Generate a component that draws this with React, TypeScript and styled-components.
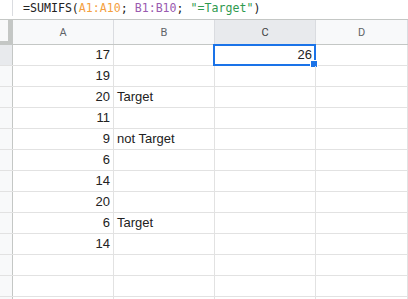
import React from 'react';
import styled, { createGlobalStyle } from 'styled-components';

const GlobalStyle = createGlobalStyle`
  body {
    margin: 0;
    background: #ffffff;
    font-family: 'Liberation Sans', Arial, sans-serif;
  }
`;

const columns = ['A', 'B', 'C', 'D'];
const selectedCol = 2;

type Row = { a?: string; b?: string; c?: string };

const rows: Row[] = [
  { a: '17', c: '26' },
  { a: '19' },
  { a: '20', b: 'Target' },
  { a: '11' },
  { a: '9', b: 'not Target' },
  { a: '6' },
  { a: '14' },
  { a: '20' },
  { a: '6', b: 'Target' },
  { a: '14' },
  {},
  {},
  {},
];

const App = () => {
  return (
    <>
      <GlobalStyle />
      <Sheet>
        <FormulaBar>
          <FormulaLabel />
          <FormulaText>
            =SUMIFS(<RefA>A1:A10</RefA>; <RefB>B1:B10</RefB>; <Str>"=Target"</Str>)
          </FormulaText>
        </FormulaBar>
        <HeaderRow>
          <Corner />
          {columns.map((c, i) => (
            <ColHeader key={c} $active={i === selectedCol} $last={i === columns.length - 1}>
              {c}
            </ColHeader>
          ))}
        </HeaderRow>
        {rows.map((r, i) => (
          <GridRow key={i}>
            <RowHeader $active={i === 0} />
            <Cell $align="right">{r.a}</Cell>
            <Cell $align="left">{r.b}</Cell>
            <Cell $align="right">
              {r.c}
              {i === 0 && (
                <>
                  <Selection />
                  <Handle />
                </>
              )}
            </Cell>
            <Cell $align="left" $last />
          </GridRow>
        ))}
      </Sheet>
    </>
  );
};

const Sheet = styled.div`
  width: 408px;
  height: 299px;
  overflow: hidden;
  background: #ffffff;
`;

const FormulaBar = styled.div`
  display: flex;
  height: 19px;
  border-bottom: 1px solid #c4c7c5;
`;
const FormulaLabel = styled.div`
  width: 12px;
  height: 16px;
  border-right: 1px solid #dadce0;
`;
const FormulaText = styled.div`
  padding-left: 10px;
  font-family: 'DejaVu Sans Mono', 'Liberation Mono', monospace;
  font-size: 11.6px;
  line-height: 16px;
  color: #222222;
  white-space: pre;
`;
const RefA = styled.span`
  color: #f4a03e;
`;
const RefB = styled.span`
  color: #9a5ab0;
`;
const Str = styled.span`
  color: #2f9a4f;
`;

const HeaderRow = styled.div`
  display: flex;
  height: 24px;
  border-bottom: 1px solid #c4c7c5;
  background: #f8f9fa;
`;
const Corner = styled.div`
  width: 12px;
  flex: none;
  border-right: 1px solid #c4c7c5;
  box-shadow: inset -4px -3px 0 #c4c7c5;
`;
const ColHeader = styled.div<{ $active?: boolean; $last?: boolean }>`
  width: 100px;
  flex: ${(p) => (p.$last ? '1' : 'none')};
  border-right: 1px solid #dadce0;
  background: ${(p) => (p.$active ? '#e8eaed' : '#f8f9fa')};
  color: ${(p) => (p.$active ? '#3c4043' : '#5f6368')};
  font-family: Roboto, 'Liberation Sans', Arial, sans-serif;
  font-size: 11px;
  display: flex;
  align-items: center;
  justify-content: center;
`;

const GridRow = styled.div`
  display: flex;
  height: 20px;
  border-bottom: 1px solid #e2e2e2;
`;
const RowHeader = styled.div<{ $active?: boolean }>`
  width: 12px;
  flex: none;
  border-right: 1px solid #c4c7c5;
  background: ${(p) => (p.$active ? '#e8eaed' : '#f8f9fa')};
`;
const Cell = styled.div<{ $align: 'left' | 'right'; $last?: boolean }>`
  position: relative;
  flex: ${(p) => (p.$last ? '1' : 'none')};
  border-right: 1px solid #e2e2e2;
  padding: 0 3px;
  box-sizing: border-box;
  width: ${(p) => (p.$last ? 'auto' : '101px')};
  text-align: ${(p) => p.$align};
  font-size: 13px;
  line-height: 20px;
  color: #222222;
  white-space: nowrap;
`;
const Selection = styled.div`
  position: absolute;
  left: -2px;
  top: -1px;
  right: -1px;
  bottom: -1px;
  border: 2px solid #1a73e8;
  pointer-events: none;
`;
const Handle = styled.div`
  position: absolute;
  right: -3px;
  bottom: -3px;
  width: 6px;
  height: 6px;
  background: #1a73e8;
  border: 1px solid #ffffff;
`;

export default App;
